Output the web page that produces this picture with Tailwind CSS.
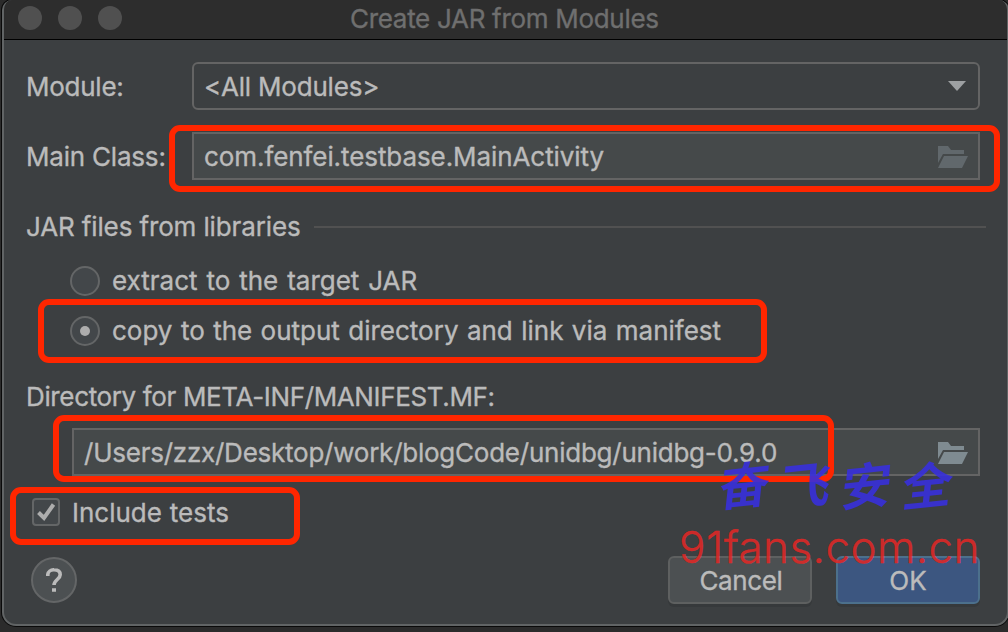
<!DOCTYPE html>
<html lang="en">
<head>
<meta charset="utf-8">
<title>Create JAR from Modules</title>
<script src="https://cdn.jsdelivr.net/npm/@tailwindcss/browser@4"></script>
</head>
<body class="relative h-[632px] w-[1008px] overflow-hidden bg-[#2b2b2b] font-['Inter',sans-serif] text-[26px] leading-8 whitespace-nowrap text-[#bbbbbb] [-webkit-text-stroke:0.35px]">

<main class="ml-0.5 flex h-[626px] w-[1007px] flex-col overflow-hidden rounded-t-[10px] rounded-b-[14px] border-2 border-t-0 border-[#616465] bg-[#3c3f41] shadow-[0_0_0_1px_#0a0a0a]">
  <header class="grid h-10 shrink-0 grid-cols-[346px_1fr] items-center border-b border-black bg-[#2d2d2d]">
    <div class="-mt-1 flex gap-4 pl-3.5">
      <i class="size-6 rounded-full bg-[#505050]"></i>
      <i class="size-6 rounded-full bg-[#505050]"></i>
      <i class="size-6 rounded-full bg-[#505050]"></i>
    </div>
    <h1 class="-mt-0.5 tracking-[-0.3px] text-[#6f6f6f]">Create JAR from Modules</h1>
  </header>

  <section class="flex flex-col pt-[22px] pr-[27px] pl-[22px]">
    <div class="flex items-center">
      <label class="mt-0.5 w-[166px] tracking-[-0.25px]">Module:</label>
      <div class="flex h-12 flex-1 items-center justify-between rounded-md border-2 border-[#646464] pr-3 pl-2.5">
        <span class="mt-0.5 tracking-[-0.2px]">&lt;All Modules&gt;</span>
        <svg class="size-[18px]" viewBox="0 0 18 18"><path d="M0 4h18L9 14z" fill="#9da0a2"/></svg>
      </div>
    </div>

    <div class="mt-[22px] flex items-center">
      <label class="mt-0.5 w-[166px] tracking-[-0.2px]">Main Class:</label>
      <div class="flex h-12 flex-1 items-center justify-between border-2 border-[#646464] bg-[#45494a] pr-2.5 pl-2.5">
        <span class="mt-0.5 tracking-[-0.08px]">com.fenfei.testbase.MainActivity</span>
        <svg class="mt-0.5 h-[22px] w-[30px]" viewBox="0 0 30 22" fill="#61686c"><path d="M0 0h10l3 4h13v4H5L0 17z"/><path d="M6 10h24l-6 12H0z"/></svg>
      </div>
    </div>

    <div class="mt-[31px] -mr-1.5 flex items-center gap-3.5">
      <h2 class="w-[274px] tracking-[-0.13px]">JAR files from libraries</h2>
      <div class="h-0.5 flex-1 bg-[#515151]"></div>
    </div>

    <div class="mt-[22px] flex items-center gap-3 pl-11">
      <i class="size-[30px] rounded-full border-2 border-[#646667] bg-[#43474a]"></i>
      <span class="[word-spacing:1.6px]">extract to the target JAR</span>
    </div>
    <div class="mt-[18px] flex items-center gap-3 pl-11">
      <i class="flex size-[30px] items-center justify-center rounded-full border-2 border-[#646667] bg-[#43474a]"><b class="size-2.5 rounded-full bg-[#adadad]"></b></i>
      <span class="[word-spacing:1.1px]">copy to the output directory and link via manifest</span>
    </div>

    <label class="mt-[34px] tracking-[-0.36px]">Directory for META-INF/MANIFEST.MF:</label>
    <div class="mt-[15px] ml-[46px] flex h-12 items-center justify-between border-2 border-[#646464] bg-[#45494a] pr-2.5 pl-2.5">
      <span class="mt-0.5 tracking-[-0.24px]">/Users/zzx/Desktop/work/blogCode/unidbg/unidbg-0.9.0</span>
      <svg class="mt-0.5 h-[22px] w-[30px]" viewBox="0 0 30 22" fill="#7f8b91"><path d="M0 0h10l3 4h13v4H5L0 17z"/><path d="M6 10h24l-6 12H0z"/></svg>
    </div>

    <div class="mt-5 flex items-center gap-3 pl-1.5">
      <i class="size-7 rounded border-2 border-[#646667] bg-[#43474a]"><svg class="size-6" viewBox="0 0 24 24" fill="none" stroke="#adadad" stroke-width="4"><path d="M4.5 12.5L10 18 19.5 4.5"/></svg></i>
      <span class="mt-px -mb-px [word-spacing:0.5px]">Include tests</span>
    </div>

    <footer class="mt-[28px] flex items-center">
      <button class="ml-[5px] flex size-[46px] items-center justify-center rounded-full border-2 border-[#646667] bg-[#4c5052]"><svg class="h-6 w-4" viewBox="0 0 16 24" fill="none" stroke="#bbbbbb" stroke-width="3.6"><path d="M1.800 8V6.500A6 5 0 0 1 8 1.800c4 0 6.200 2 6.200 5 0 4.500-6.200 5-6.200 10.200M6 22h4"/></svg></button>
      <button class="mr-6 ml-auto h-12 w-36 rounded-md border-2 border-[#5e6060] bg-[#4c5052] pt-0.5 pl-0.5 tracking-[-0.35px] shadow-[0_3px_0_#36393b]">Cancel</button>
      <button class="h-12 w-36 rounded-md border-2 border-[#4c708c] bg-[#3c5680] pt-0.5 shadow-[0_3px_0_#36393b]">OK</button>
    </footer>
  </section>
</main>

<!-- highlight frames -->
<div class="absolute top-[125px] left-[169px] h-[67px] w-[831px] rounded-[11px] border-6 border-[#ff2600]"></div>
<div class="absolute top-[299px] left-[38px] h-16 w-[729px] rounded-[11px] border-6 border-[#ff2600]"></div>
<div class="absolute top-[415px] left-[53px] h-[67px] w-[781px] rounded-[11px] border-6 border-[#ff2600]"></div>
<div class="absolute top-[487px] left-[10px] h-[58px] w-[290px] rounded-[11px] border-6 border-[#ff2600]"></div>

<!-- watermark -->
<div class="absolute top-[454px] left-[720px] flex gap-[11px] font-['Noto_Sans_CJK_SC',sans-serif] text-[50px] leading-[56px] font-bold text-[#3730dc]/90 [-webkit-text-stroke:0]">
  <span class="-skew-x-6 -skew-y-6">奋</span><span class="-skew-x-6 -skew-y-6">飞</span><span class="-skew-x-6 -skew-y-6">安</span><span class="-skew-x-6 -skew-y-6">全</span>
</div>
<div class="absolute top-[519px] left-[679px] text-[44px] leading-[56px] font-light tracking-[0.42px] text-[#e02826]/90">91fans.com.cn</div>
</body>
</html>
